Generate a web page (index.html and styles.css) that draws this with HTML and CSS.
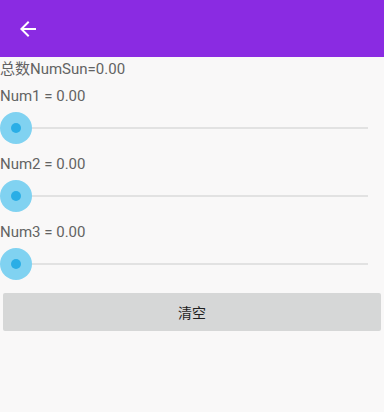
FILE: index.html
```html
<!DOCTYPE html>
<html lang="zh">
<head>
    <meta charset="UTF-8">
    <meta name="viewport" content="width=device-width, initial-scale=1.0">
    <title>NumSun</title>
    <link rel="stylesheet" href="styles.css">
</head>
<body>
    <div class="toolbar">
        <svg class="back" width="24" height="24" viewBox="0 0 24 24">
            <path d="M20 11H7.83l5.59-5.59L12 4l-8 8 8 8 1.41-1.41L7.83 13H20v-2z" fill="#fff"/>
        </svg>
    </div>
    <div class="content">
        <p class="label total">总数NumSun=0.00</p>
        <p class="label">Num1 = 0.00</p>
        <div class="slider"><span class="thumb"></span><span class="track"></span></div>
        <p class="label">Num2 = 0.00</p>
        <div class="slider"><span class="thumb"></span><span class="track"></span></div>
        <p class="label">Num3 = 0.00</p>
        <div class="slider"><span class="thumb"></span><span class="track"></span></div>
        <button class="clear">清空</button>
    </div>
</body>
</html>
```

FILE: styles.css
```css
body {
    margin: 0;
    background-color: #f9f8f8;
    font-family: Roboto, "Noto Sans CJK SC", sans-serif;
}
.toolbar {
    height: 57px;
    background-color: #8a2be2;
    display: flex;
    align-items: center;
    padding-left: 16px;
}
.back {
    display: block;
}
.content {
    display: flex;
    flex-direction: column;
}
.label {
    margin: 0;
    font-size: 15px;
    line-height: 20px;
    color: #636363;
}
.total {
    margin-top: 2px;
    margin-bottom: 7px;
}
.slider {
    height: 32px;
    margin: 6px 0 10px;
    display: flex;
    align-items: center;
    padding-right: 16px;
}
.thumb {
    width: 32px;
    height: 32px;
    border-radius: 50%;
    background-color: #80d2f1;
    display: flex;
    align-items: center;
    justify-content: center;
    flex-shrink: 0;
}
.thumb::after {
    content: "";
    width: 10px;
    height: 10px;
    border-radius: 50%;
    background-color: #2aaee6;
}
.track {
    flex: 1;
    height: 2px;
    background-color: #e2e2e2;
}
.clear {
    margin: 3px 3px 0;
    height: 38px;
    border: none;
    border-radius: 2px;
    background-color: #d6d7d7;
    color: #1f1f1f;
    font-size: 14px;
    font-family: Roboto, "Noto Sans CJK SC", sans-serif;
}
```
